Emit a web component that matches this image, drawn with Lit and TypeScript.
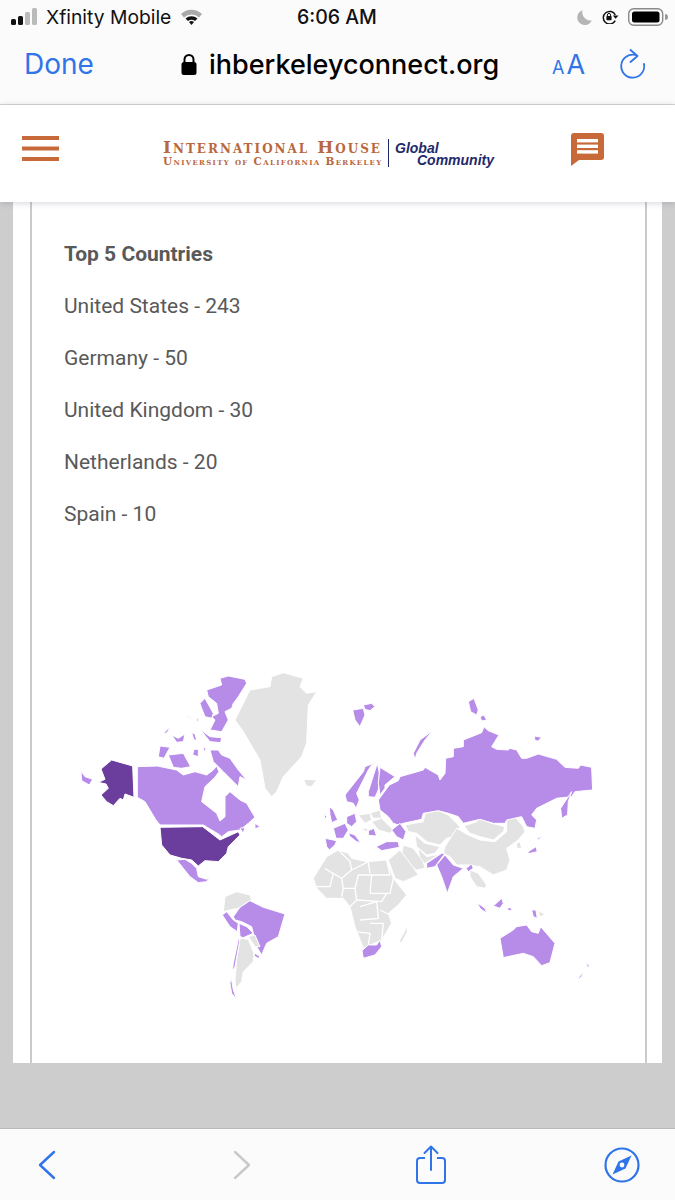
import { LitElement, css, html, svg } from "lit";
import { customElement } from "lit/decorators.js";

const LIGHT = "#b78ce9";
const DARK = "#6b3d9c";
const GREY = "#e3e3e3";

/** West half of the map, traced at 3x from origin (70,660). */
const WEST: [string, string][] = [
  [GREY, "495,180 540,90 600,80 605,50 640,38 700,55 690,80 710,100 740,95 715,135 710,250 695,290 640,350 620,395 605,410 585,385 570,300 520,215"],
  [GREY, "700,358 740,360 725,380 710,378"],
  [DARK, "93,327 125,300 188,318 192,412 165,402 160,420 150,415 130,437 110,425 93,405 115,385 108,372 85,367 105,358"],
  [LIGHT, "33,333 45,350 68,358 58,375 35,362"],
  [LIGHT, "202,320 262,318 320,330 340,345 375,335 410,345 430,330 440,318 447,335 435,352 405,380 395,425 440,460 450,483 465,470 465,410 480,395 510,420 530,430 555,472 535,490 510,510 475,515 455,530 445,522 400,495 270,495 258,480 240,450 225,425 202,412"],
  [DARK, "270,502 398,500 450,540 505,515 510,525 475,560 470,580 445,605 405,602 385,618 365,600 335,595 300,585 275,555"],
  [LIGHT, "320,600 345,598 365,610 380,625 385,650 410,658 420,650 410,665 385,668 360,650"],
  [LIGHT, "410,90 455,75 450,55 475,48 525,58 530,70 505,110 490,130 485,145 465,155 475,180 455,215 420,210 435,180 425,170 445,160 440,130 415,110"],
  [LIGHT, "390,130 405,115 430,160 425,175 405,170 395,145"],
  [LIGHT, "420,270 445,270 455,285 480,295 505,330 530,360 510,350 505,380 485,360 460,335 430,305"],
  [LIGHT, "295,285 340,280 362,320 335,325 310,322"],
  [LIGHT, "270,258 300,262 282,295 265,290"],
  [LIGHT, "278,222 300,200 292,218"],
  [LIGHT, "305,225 325,235 345,222 340,245 320,247"],
  [LIGHT, "365,218 375,222 380,240 372,240"],
  [LIGHT, "390,208 420,230 455,233 452,248 420,245"],
  [LIGHT, "372,268 385,268 385,290 368,285"],
  [LIGHT, "400,265 408,262 405,280"],
  [LIGHT, "350,165 370,180 355,172"],
  [LIGHT, "380,170 388,185 380,182"],
  [LIGHT, "555,490 570,500 555,507"],
  [LIGHT, "510,505 525,502 520,520"],
  [GREY, "465,710 500,695 540,705 545,720 505,745 480,750 460,755"],
  [LIGHT, "490,770 510,742 540,722 580,742 645,762 625,830 590,850 575,885 560,860 545,800 515,785 495,780"],
  [LIGHT, "457,765 470,755 490,780 505,790 502,815 480,800"],
  [LIGHT, "507,790 530,800 550,820 520,833 510,830"],
  [GREY, "535,830 555,825 570,860 555,860"],
  [LIGHT, "555,880 570,890 565,895 552,888"],
  [GREY, "510,835 535,838 552,880 550,905 520,935 515,965 498,985 495,960 500,900"],
  [LIGHT, "505,838 510,838 495,920 487,935 490,910"],
  [LIGHT, "483,950 490,990 500,1018 485,1000 480,970"],
];

/** East half of the map, traced at 3x from origin (300,660). */
const EAST: [string, string][] = [
  [GREY, "40,655 80,590 115,570 145,580 155,595 200,605 260,600 280,655 320,705 295,735 265,760 275,790 245,840 190,865 165,800 150,740 130,715 80,715 50,685"],
  [GREY, "297,845 322,798 322,815 305,848"],
  [GREY, "175,465 210,460 215,480 195,490"],
  [GREY, "210,460 240,450 245,475 220,475"],
  [GREY, "215,485 245,475 280,510 270,520 235,510"],
  [GREY, "180,505 205,505 200,515"],
  [GREY, "315,495 370,485 375,460 415,452 445,465 470,490 480,500 460,530 440,535 420,555 380,545 350,520 325,515"],
  [GREY, "492,498 530,485 540,475 575,490 615,500 610,515 580,540 540,530 510,520"],
  [GREY, "435,560 470,505 505,525 540,540 585,545 620,515 620,475 645,470 670,500 675,515 655,540 620,565 630,600 620,630 580,645 540,620 500,615 470,615 450,590 430,580"],
  [GREY, "345,525 375,550 420,560 405,580 380,585 350,560"],
  [GREY, "355,565 380,590 405,585 415,585 375,610 360,605"],
  [GREY, "310,555 340,565 370,605 375,625 350,630 325,615 305,580"],
  [GREY, "265,600 300,570 345,630 355,645 310,665 285,655"],
  [GREY, "510,630 535,640 560,675 555,685 530,680 510,650"],
  [GREY, "650,550 660,545 665,565 650,565"],
  [GREY, "715,750 735,765 720,770"],
  [LIGHT, "235,420 268,375 295,362 300,350 370,330 375,322 415,345 420,360 435,340 437,295 460,290 460,265 490,260 490,240 545,218 552,200 565,212 597,225 575,260 590,268 625,270 630,265 650,270 665,295 680,295 715,282 770,298 795,322 835,325 842,315 875,322 878,390 825,395 815,410 770,415 710,445 695,465 710,480 705,505 680,500 665,470 620,480 615,490 580,490 540,478 490,490 475,470 445,460 415,452 370,460 365,478 310,490 295,495 280,490 265,470 240,450"],
  [LIGHT, "275,510 300,490 318,515 310,540 290,530"],
  [LIGHT, "340,280 360,240 398,212 375,240 350,280 345,300"],
  [LIGHT, "782,445 815,395 805,425 803,465 785,475"],
  [LIGHT, "158,150 190,145 195,165 180,200 165,180"],
  [LIGHT, "190,135 215,130 225,140 210,152 195,148"],
  [LIGHT, "505,125 522,115 535,150 530,165 512,155"],
  [LIGHT, "540,170 552,165 560,180 545,183"],
  [LIGHT, "703,228 725,232 715,243 705,242"],
  [LIGHT, "135,405 190,335 195,320 240,302 215,315 205,330 170,400 178,420 168,445 160,430 140,425"],
  [LIGHT, "205,395 228,322 232,310 238,340 235,390 225,412 205,410"],
  [LIGHT, "240,322 285,350 255,375 255,385 240,405 235,370"],
  [LIGHT, "88,440 100,450 113,480 95,488 90,465"],
  [LIGHT, "72,460 80,470 75,478"],
  [LIGHT, "100,505 135,490 145,510 130,535 108,535"],
  [LIGHT, "140,470 165,460 170,485 155,500 140,490"],
  [LIGHT, "145,518 165,525 182,548 170,545 150,530"],
  [LIGHT, "75,535 110,542 105,555 88,570 80,560"],
  [LIGHT, "205,512 222,505 230,528 205,526"],
  [LIGHT, "228,560 260,545 295,545 298,562 245,572"],
  [LIGHT, "380,610 425,580 435,580 405,620 380,625"],
  [LIGHT, "410,615 435,585 460,615 490,625 460,650 442,700 425,650"],
  [LIGHT, "498,625 515,612 520,625 505,635"],
  [LIGHT, "532,728 555,745 560,760 540,745"],
  [LIGHT, "580,738 605,715 610,730 600,745"],
  [LIGHT, "622,742 635,745 635,752 625,752"],
  [LIGHT, "695,750 708,750 712,775 700,770"],
  [LIGHT, "680,578 708,560 712,575 690,580"],
  [LIGHT, "712,535 728,528 715,540"],
  [LIGHT, "600,835 640,810 650,800 680,795 695,815 715,820 722,800 765,850 750,908 725,917 700,890 670,880 610,893"],
  [LIGHT, "860,910 868,915 863,928"],
  [LIGHT, "830,960 850,935 845,950"],
  [LIGHT, "186,872 205,855 230,855 240,840 245,860 225,885 190,895"],
];

/** Country borders inside the grey landmasses. */
const BORDERS = [
  "115,570 150,605 155,630 125,655 90,635 75,625",
  "155,630 205,605 210,640",
  "260,600 270,645 215,645 210,700",
  "125,655 130,685 165,685 175,645 215,645",
  "130,685 125,710",
  "165,685 170,720 150,740",
  "210,700 270,700 280,655",
  "170,720 245,725 260,700",
  "180,740 230,725 235,775 180,780",
  "240,750 280,770 280,790",
  "165,815 210,820 205,855",
  "210,790 250,790 245,840",
  "100,640 90,680 50,680",
];

@customElement("app-root")
export class AppRoot extends LitElement {
  private countries = ["United States - 243", "Germany - 50", "United Kingdom - 30", "Netherlands - 20", "Spain - 10"];

  private renderMap() {
    const shapes = (list: [string, string][]) =>
      list.map(([fill, points]) => svg`<polygon fill=${fill} points=${points} stroke="#fff" stroke-width="3" stroke-linejoin="round" />`);
    return html`
      <svg class="map" viewBox="70 660 540 350" width="540" height="350" role="img" aria-label="World map">
        <g transform="translate(70 660) scale(0.3333)">${shapes(WEST)}</g>
        <g transform="translate(300 660) scale(0.3333)">
          ${shapes(EAST)}
          ${BORDERS.map((p) => svg`<polyline points=${p} fill="none" stroke="#fff" stroke-width="4" />`)}
        </g>
      </svg>
    `;
  }

  render() {
    return html`
      <div class="chrome">
        <div class="status">
          <svg class="signal" width="27" height="18" viewBox="0 0 27 18">
            <rect x="0" y="11" width="5" height="6" rx="1.5" fill="#111" />
            <rect x="7" y="8" width="5" height="9" rx="1.5" fill="#111" />
            <rect x="14" y="4" width="5" height="13" rx="1.5" fill="#bbb" />
            <rect x="21" y="0" width="5" height="17" rx="1.5" fill="#bbb" />
          </svg>
          <span class="carrier">Xfinity Mobile</span>
          <svg class="wifi" width="23" height="18" viewBox="0 0 23 18">
            <path d="M1 6 A15 15 0 0 1 22 6 L19 9.5 A11 11 0 0 0 4 9.5 Z" fill="#aaa" />
            <path d="M5.5 10.5 A9 9 0 0 1 17.5 10.5 L15 13 A6 6 0 0 0 8 13 Z" fill="#111" />
            <path d="M9 14 A4 4 0 0 1 14 14 L11.5 17 Z" fill="#111" />
          </svg>
          <span class="time">6:06 AM</span>
          <svg class="moon" width="16" height="15" viewBox="0 0 16 15">
            <path d="M6.5 0.2 A7.6 7.6 0 1 0 15.8 10.5 A8.5 8.5 0 0 1 6.5 0.2 Z" fill="#b5b5b5" />
          </svg>
          <svg class="rot" width="17" height="14" viewBox="0 0 17 14">
            <path d="M13.2 10.6 A6.3 6.3 0 1 1 13.3 5" fill="none" stroke="#111" stroke-width="1.5" />
            <path d="M10.8 5.5 L16.5 5.5 L13.6 8.8 Z" fill="#111" />
            <rect x="4.4" y="6" width="5.2" height="4.2" rx="0.8" fill="#111" />
            <path d="M5.4 6.5 V5 A1.6 1.6 0 0 1 8.6 5 V6.5" fill="none" stroke="#111" stroke-width="1" />
          </svg>
          <svg class="battery" width="40" height="18" viewBox="0 0 40 18">
            <rect x="0.7" y="0.7" width="34" height="16.6" rx="5" fill="none" stroke="#8a8a8a" stroke-width="1.4" />
            <rect x="4" y="3.5" width="27.5" height="11" rx="2.5" fill="#000" />
            <path d="M37 6 A3 3 0 0 1 37 12 Z" fill="#999" />
          </svg>
        </div>
        <div class="address">
          <span class="done">Done</span>
          <svg class="lock" width="16" height="21" viewBox="0 0 16 21">
            <rect x="0.5" y="8" width="15" height="13" rx="2.5" fill="#000" />
            <path d="M3.5 9 V5.5 A4.5 4.5 0 0 1 12.5 5.5 V9" fill="none" stroke="#000" stroke-width="2" />
          </svg>
          <span class="url">ihberkeleyconnect.org</span>
          <span class="aa"><small>A</small>A</span>
          <svg class="reload" width="28" height="30" viewBox="0 0 28 30">
            <path d="M16.5 6 A11.5 11.5 0 1 0 25 15" fill="none" stroke="#2f74e8" stroke-width="1.8" stroke-linecap="round" />
            <path d="M11.5 1 L18.5 7 L11.5 13" fill="none" stroke="#2f74e8" stroke-width="1.8" stroke-linecap="round" stroke-linejoin="round" />
          </svg>
        </div>
      </div>

      <header class="site">
        <svg class="menu" width="37" height="25" viewBox="0 0 37 25">
          <rect y="0" width="37" height="4" fill="#c8693a" />
          <rect y="10.5" width="37" height="4" fill="#c8693a" />
          <rect y="21" width="37" height="4" fill="#c8693a" />
        </svg>
        <div class="logo">
          <div class="ih">
            <div class="ih-name">International House</div>
            <div class="ih-sub">University of California Berkeley</div>
          </div>
          <div class="gc">
            <span>Global</span>
            <span class="gc2">Community</span>
          </div>
        </div>
        <svg class="chat" width="33" height="33" viewBox="0 0 33 33">
          <path d="M3 0 H30 A3 3 0 0 1 33 3 V24 A3 3 0 0 1 30 27 H8 L0 33 V3 A3 3 0 0 1 3 0 Z" fill="#c8693a" />
          <rect x="6" y="6" width="21" height="3.4" fill="#fff" />
          <rect x="6" y="11.6" width="21" height="3.4" fill="#fff" />
          <rect x="6" y="17.2" width="21" height="3.4" fill="#fff" />
        </svg>
      </header>

      <main class="page">
        <section class="panel">
          <div class="inner">
            <div class="line head">Top 5 Countries</div>
            ${this.countries.map((c) => html`<div class="line">${c}</div>`)}
            ${this.renderMap()}
          </div>
        </section>
      </main>

      <footer class="toolbar">
        <svg width="18" height="30" viewBox="0 0 18 30">
          <path d="M16 2 L2 15 L16 28" fill="none" stroke="#2f74e8" stroke-width="2.4" stroke-linecap="round" stroke-linejoin="round" />
        </svg>
        <svg class="fwd" width="18" height="30" viewBox="0 0 18 30">
          <path d="M2 2 L16 15 L2 28" fill="none" stroke="#c9c9c9" stroke-width="2.4" stroke-linecap="round" stroke-linejoin="round" />
        </svg>
        <svg class="share" width="30" height="39" viewBox="0 0 30 39">
          <path d="M9 13 H4 A3 3 0 0 0 1 16 V35 A3 3 0 0 0 4 38 H26 A3 3 0 0 0 29 35 V16 A3 3 0 0 0 26 13 H21" fill="none" stroke="#2f74e8" stroke-width="2" />
          <path d="M15 25 V1.5 M8.5 8 L15 1.5 L21.5 8" fill="none" stroke="#2f74e8" stroke-width="2" stroke-linecap="round" stroke-linejoin="round" />
        </svg>
        <svg class="compass" width="36" height="36" viewBox="0 0 36 36">
          <circle cx="18" cy="18" r="16.5" fill="none" stroke="#2f74e8" stroke-width="2.2" />
          <path d="M27.5 8.5 L21.5 21.5 L14.5 14.5 Z M8.5 27.5 L14.5 14.5 L21.5 21.5 Z" fill="#2f74e8" />
          <circle cx="18" cy="18" r="2.4" fill="#fff" />
        </svg>
      </footer>
    `;
  }

  static styles = css`
    :host {
      display: flex;
      flex-direction: column;
      width: 675px;
      height: 1200px;
      overflow: hidden;
      background: #cdcdcd;
      font-family: Roboto, "Liberation Sans", sans-serif;
    }

    svg {
      display: block;
      flex: none;
    }

    .chrome {
      height: 104px;
      background: #fbfbfb;
      border-bottom: 1px solid #d6d6d8;
      font-family: Inter, "Liberation Sans", sans-serif;
      color: #111;
    }

    .status {
      display: flex;
      align-items: center;
      height: 34px;
      padding-left: 11px;
    }

    .carrier {
      margin-left: 8px;
      width: 134px;
      font-size: 19.3px;
      white-space: nowrap;
    }

    .time {
      margin-left: 94px;
      width: 279px;
      font-size: 19.5px;
      font-weight: 500;
      white-space: nowrap;
    }

    .rot {
      margin-left: 10px;
    }

    .battery {
      margin-left: 9px;
    }

    .address {
      display: flex;
      align-items: center;
      height: 60px;
      padding-left: 24px;
    }

    .done {
      width: 157px;
      font-size: 28px;
      color: #2f74e8;
    }

    .url {
      margin-left: 12px;
      width: 343px;
      font-size: 27px;
      font-weight: 500;
      color: #000;
      white-space: nowrap;
    }

    .aa {
      width: 67px;
      font-size: 27px;
      color: #2f74e8;
      white-space: nowrap;
    }

    .aa small {
      font-size: 18px;
      margin-right: 2px;
    }

    .site {
      position: relative;
      z-index: 1;
      display: flex;
      align-items: center;
      height: 97px;
      padding-left: 22px;
      background: #fff;
      box-shadow: 0 1px 6px rgba(60, 60, 90, 0.22);
    }

    .menu {
      margin-top: -11px;
    }

    .logo {
      display: flex;
      align-items: stretch;
      margin-left: 104px;
      width: 408px;
      margin-top: -1px;
    }

    .ih {
      box-sizing: border-box;
      width: 226px;
      height: 28px;
      border-right: 1px solid #1f2a6b;
      font-family: "DejaVu Serif", serif;
      font-variant: small-caps;
      font-weight: 700;
      color: #b9683d;
      white-space: nowrap;
    }

    .ih-name {
      font-size: 17px;
      line-height: 17px;
      letter-spacing: 2px;
    }

    .ih-sub {
      font-size: 10.5px;
      line-height: 11px;
      letter-spacing: 1.3px;
    }

    .gc {
      display: flex;
      flex-direction: column;
      padding: 3px 0 0 6px;
      font-family: "Liberation Sans", sans-serif;
      font-style: italic;
      font-weight: 700;
      font-size: 14px;
      line-height: 12px;
      color: #1f2a6b;
    }

    .gc2 {
      margin-left: 22px;
    }

    .chat {
      margin-top: -8px;
    }

    .page {
      flex: 1;
      min-height: 0;
    }

    .panel {
      height: 861px;
      margin: 0 13px;
      padding: 0 15px 0 17px;
      background: #fff;
    }

    .inner {
      box-sizing: border-box;
      height: 100%;
      padding-top: 26px;
      border-left: 2px solid #c9c9ce;
      border-right: 2px solid #c9c9ce;
    }

    .line {
      height: 52px;
      padding-left: 32px;
      font-size: 21px;
      line-height: 52px;
      color: #595959;
    }

    .head {
      font-weight: 700;
    }

    .map {
      margin: 120px 0 0 38px;
    }

    .toolbar {
      display: flex;
      align-items: center;
      height: 71px;
      padding-left: 38px;
      background: #fbfbfb;
      border-top: 1px solid #b9b9b9;
    }

    .fwd {
      margin-left: 177px;
    }

    .share {
      margin-left: 165px;
    }

    .compass {
      margin-left: 158px;
    }
  `;
}
